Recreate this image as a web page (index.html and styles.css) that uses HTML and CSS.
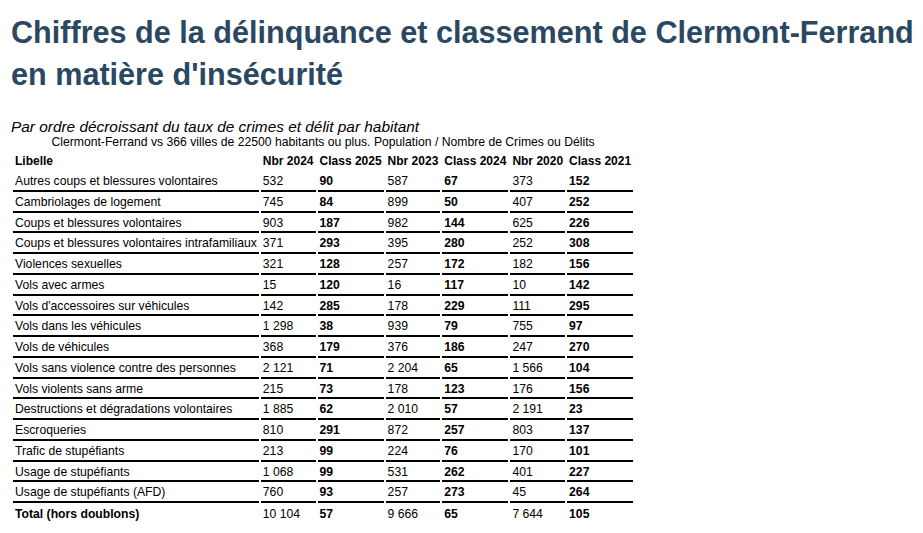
FILE: index.html
```html
<!DOCTYPE html>
<html lang="fr">
<head>
<meta charset="utf-8">
<title>Chiffres de la délinquance Clermont-Ferrand</title>
<link rel="stylesheet" href="styles.css">
</head>
<body>
<h1 class="title">Chiffres de la délinquance et classement de Clermont-Ferrand en matière d'insécurité</h1>
<p class="subtitle">Par ordre décroissant du taux de crimes et délit par habitant</p>
<table class="stats">
<caption>Clermont-Ferrand vs 366 villes de 22500 habitants ou plus. Population / Nombre de Crimes ou Délits</caption>
<thead>
<tr><th>Libelle</th><th>Nbr 2024</th><th>Class 2025</th><th>Nbr 2023</th><th>Class 2024</th><th>Nbr 2020</th><th>Class 2021</th></tr>
</thead>
<tbody>
<tr><td>Autres coups et blessures volontaires</td><td>532</td><td class="b">90</td><td>587</td><td class="b">67</td><td>373</td><td class="b">152</td></tr>
<tr><td>Cambriolages de logement</td><td>745</td><td class="b">84</td><td>899</td><td class="b">50</td><td>407</td><td class="b">252</td></tr>
<tr><td>Coups et blessures volontaires</td><td>903</td><td class="b">187</td><td>982</td><td class="b">144</td><td>625</td><td class="b">226</td></tr>
<tr><td>Coups et blessures volontaires intrafamiliaux</td><td>371</td><td class="b">293</td><td>395</td><td class="b">280</td><td>252</td><td class="b">308</td></tr>
<tr><td>Violences sexuelles</td><td>321</td><td class="b">128</td><td>257</td><td class="b">172</td><td>182</td><td class="b">156</td></tr>
<tr><td>Vols avec armes</td><td>15</td><td class="b">120</td><td>16</td><td class="b">117</td><td>10</td><td class="b">142</td></tr>
<tr><td>Vols d'accessoires sur véhicules</td><td>142</td><td class="b">285</td><td>178</td><td class="b">229</td><td>111</td><td class="b">295</td></tr>
<tr><td>Vols dans les véhicules</td><td>1 298</td><td class="b">38</td><td>939</td><td class="b">79</td><td>755</td><td class="b">97</td></tr>
<tr><td>Vols de véhicules</td><td>368</td><td class="b">179</td><td>376</td><td class="b">186</td><td>247</td><td class="b">270</td></tr>
<tr><td>Vols sans violence contre des personnes</td><td>2 121</td><td class="b">71</td><td>2 204</td><td class="b">65</td><td>1 566</td><td class="b">104</td></tr>
<tr><td>Vols violents sans arme</td><td>215</td><td class="b">73</td><td>178</td><td class="b">123</td><td>176</td><td class="b">156</td></tr>
<tr><td>Destructions et dégradations volontaires</td><td>1 885</td><td class="b">62</td><td>2 010</td><td class="b">57</td><td>2 191</td><td class="b">23</td></tr>
<tr><td>Escroqueries</td><td>810</td><td class="b">291</td><td>872</td><td class="b">257</td><td>803</td><td class="b">137</td></tr>
<tr><td>Trafic de stupéfiants</td><td>213</td><td class="b">99</td><td>224</td><td class="b">76</td><td>170</td><td class="b">101</td></tr>
<tr><td>Usage de stupéfiants</td><td>1 068</td><td class="b">99</td><td>531</td><td class="b">262</td><td>401</td><td class="b">227</td></tr>
<tr><td>Usage de stupéfiants (AFD)</td><td>760</td><td class="b">93</td><td>257</td><td class="b">273</td><td>45</td><td class="b">264</td></tr>
<tr class="total"><td class="b">Total (hors doublons)</td><td>10 104</td><td class="b">57</td><td>9 666</td><td class="b">65</td><td>7 644</td><td class="b">105</td></tr>
</tbody>
</table>
</body>
</html>
```
FILE: styles.css
```css
html { background: #ffffff; }
body {
  margin: 0;
  padding: 0 5px 0 11px;
  font-family: "Liberation Sans", Arial, sans-serif;
  color: #000000;
}
.title {
  margin: 11px 0 0;
  font-size: 30.6px;
  line-height: 42px;
  font-weight: bold;
  color: #2a4862;
}
.subtitle {
  margin: 23px 0 0;
  font-size: 15.4px;
  line-height: 17px;
  font-style: italic;
}
.stats {
  border-collapse: separate;
  border-spacing: 2px;
  font-size: 12.2px;
  margin-left: 0;
}
.stats caption {
  font-size: 12.2px;
  line-height: 14px;
  text-align: center;
}
.stats th {
  text-align: left;
  font-size: 12px;
  font-weight: bold;
  padding: 3px 2px 3px;
  line-height: 14px;
}
.stats td {
  text-align: left;
  padding: 2px 2px 1px;
  line-height: 13.75px;
  border-bottom: 2px solid #000000;
}
.stats td.b { font-weight: bold; }
.stats tr.total td {
  padding-top: 3px;
  border-bottom-color: transparent;
}
```
